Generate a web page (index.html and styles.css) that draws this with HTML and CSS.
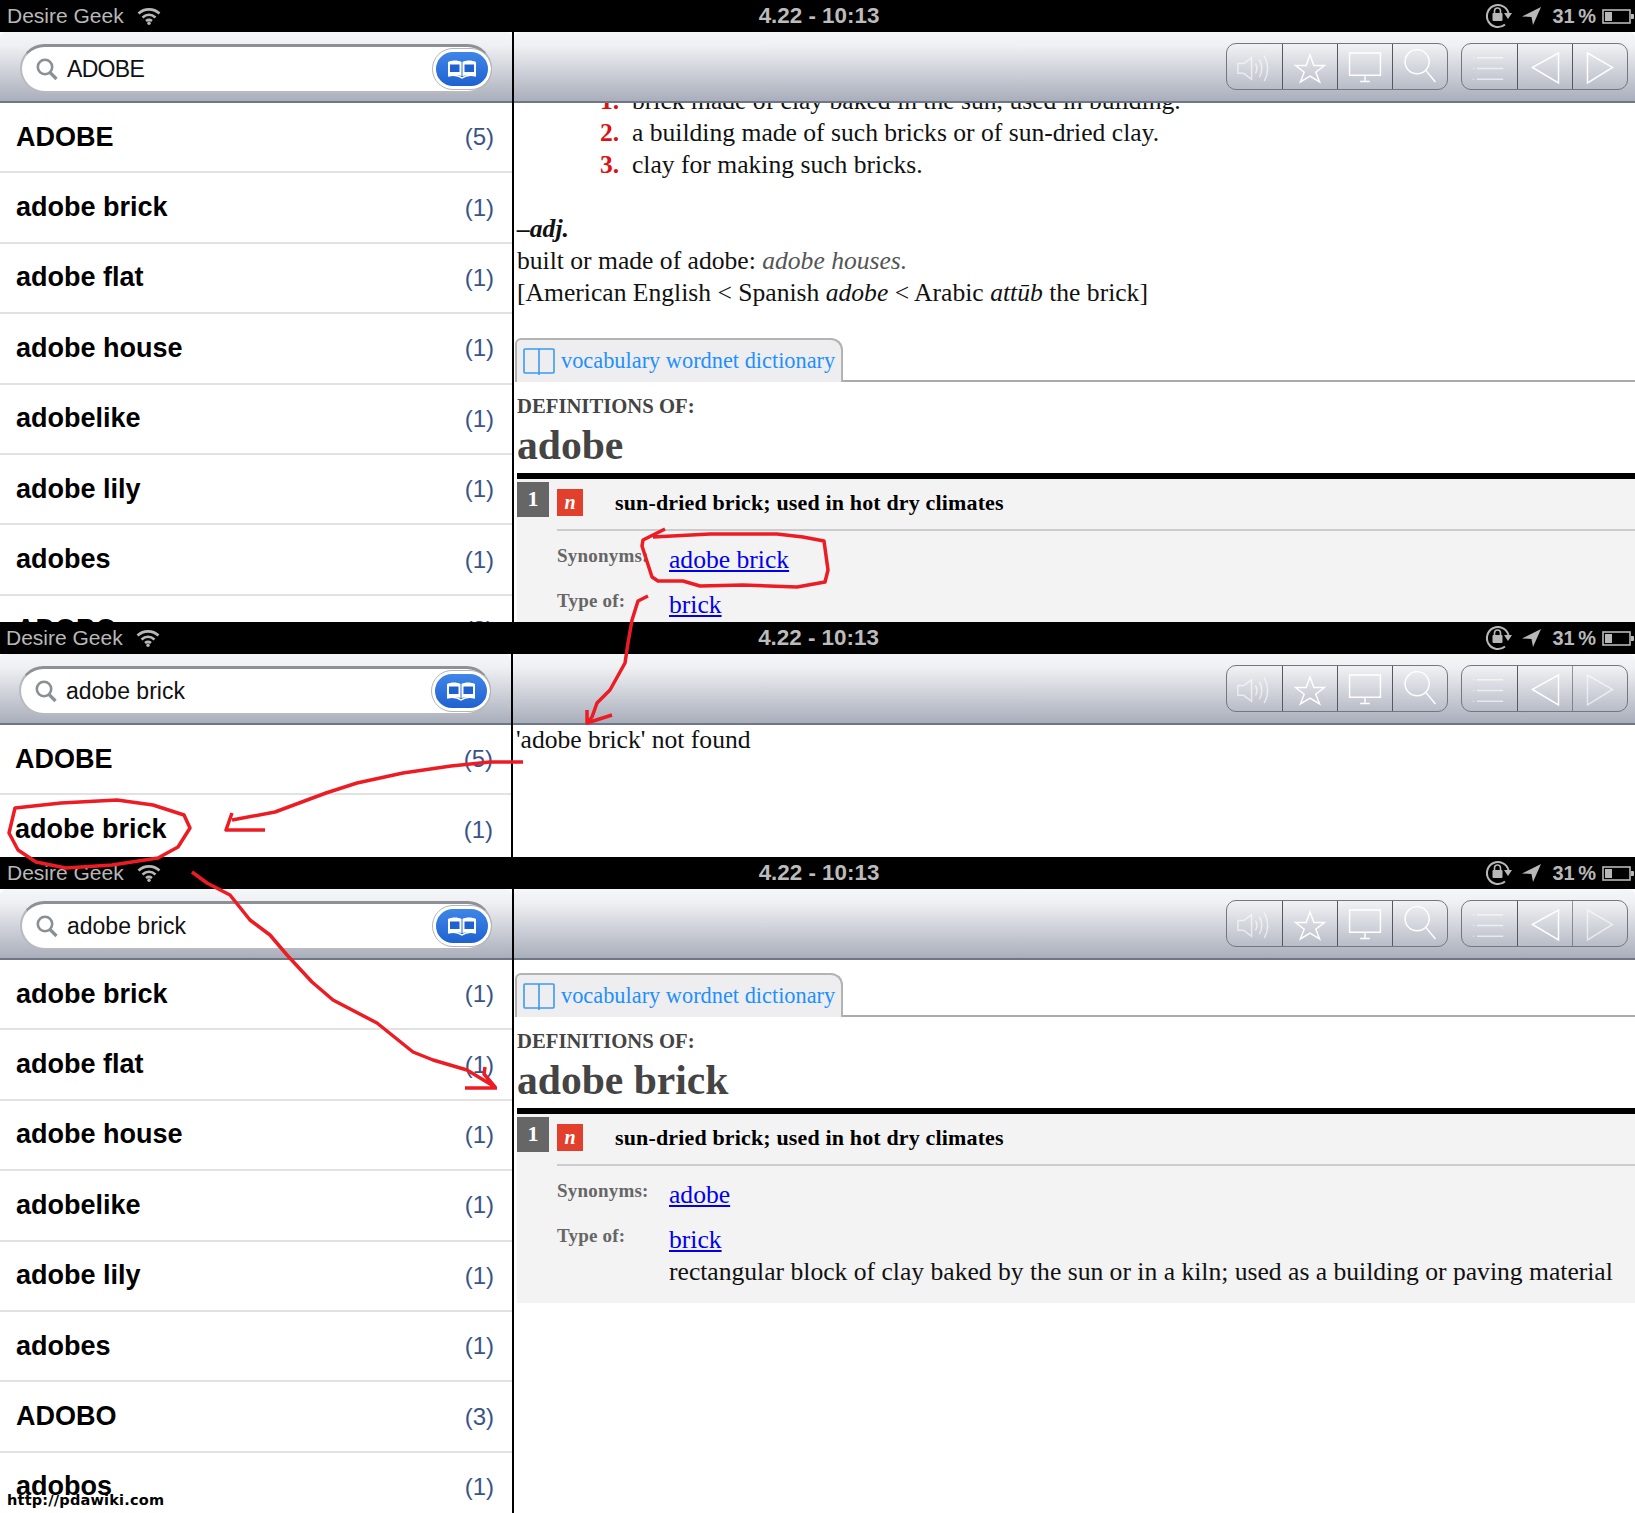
FILE: index.html
```html
<!DOCTYPE html>
<html lang="en">
<head>
    <meta charset="UTF-8">
    <meta name="viewport" content="width=device-width, initial-scale=1.0">
    <title>Dictionary lookup of adobe brick</title>
    <link rel="stylesheet" href="styles.css">
</head>
<body>
    <!-- shared icons -->
    <svg class="defs" width="0" height="0">
        <symbol id="wifi" viewBox="0 0 24 18"><path d="M1.5 6.5C7.5 1 16.500 1 22.500 6.500M5.500 10.500C9.500 7 14.500 7 18.500 10.500M9 14C11 12.500 13 12.500 15 14" fill="none" stroke="#b8b8b8" stroke-width="2.600"/><circle cx="12" cy="16.300" r="1.700" fill="#b8b8b8"/></symbol>
        <symbol id="lock" viewBox="0 0 28 28"><path d="M21 22.500A11 11 0 1 1 24.500 11" fill="none" stroke="#b8b8b8" stroke-width="2"/><path d="M20 11h8l-4 6z" fill="#b8b8b8"/><rect x="8.500" y="11" width="10" height="8" rx="1" fill="#b8b8b8"/><path d="M10.500 11V9a3 3 0 0 1 6 0v2" fill="none" stroke="#b8b8b8" stroke-width="1.600"/></symbol>
        <symbol id="arrow" viewBox="0 0 20 18"><path d="M19 0L0 9.500l9.500 .5L11 18z" fill="#b8b8b8"/></symbol>
        <symbol id="battery" viewBox="0 0 33 15"><rect x="1" y="1" width="27" height="13" fill="none" stroke="#b8b8b8" stroke-width="1.600"/><rect x="3" y="3" width="7" height="9" fill="#b8b8b8"/><path d="M29 5h2a1 1 0 0 1 1 1v3a1 1 0 0 1-1 1h-2z" fill="#b8b8b8"/></symbol>
        <symbol id="search" viewBox="0 0 22 23"><circle cx="9" cy="9" r="7.200" fill="none" stroke="#8a8f96" stroke-width="2.600"/><path d="M14 14.500L20.500 21" stroke="#8a8f96" stroke-width="3.200" fill="none"/></symbol>
        <symbol id="book" viewBox="0 0 30 20"><path d="M1 3C5 1 11 1 14.500 3V17C11 15.500 5 15.500 1 17zM15.500 3C19 1 25 1 29 3V17C25 15.500 19 15.500 15.500 17z" fill="#fff"/><path d="M3 5.500h9.500v7.500H3zM17.500 5.500H27v7.500h-9.500z" fill="#1f62cf"/><path d="M1 17C5 16 11 16 15 19C19 16 25 16 29 17" fill="none" stroke="#fff" stroke-width="1.500"/></symbol>
        <symbol id="sound" viewBox="0 0 56 46"><path d="M11 20h6l8-6v22l-8-6h-6zM29 20q3 5 0 10M33 16q5 9 0 18M38 12q7 13 0 26"/></symbol>
        <symbol id="star" viewBox="0 0 56 46"><path d="M28 11l4 11h11l-9 7 4 10-10-6-10 6 4-10-9-7h11z"/></symbol>
        <symbol id="screen" viewBox="0 0 56 46"><path d="M12 9h32v23H12zM28 32v6M23 38.500h10"/></symbol>
        <symbol id="find" viewBox="0 0 56 46"><circle cx="25" cy="18" r="12.500"/><path d="M34 27l10 12"/></symbol>
        <symbol id="list" viewBox="0 0 56 46"><path d="M15 14h27M15 25h27M15 36h27M11 14h1M11 25h1M11 36h1"/></symbol>
        <symbol id="back" viewBox="0 0 56 46"><path d="M15 24L42 9v31z"/></symbol>
        <symbol id="forward" viewBox="0 0 56 46"><path d="M15 9l26 15-26 16z"/></symbol>
        <symbol id="tabbook" viewBox="0 0 32 28"><path d="M2 2h28a1 1 0 0 1 1 1v22a1 1 0 0 1-1 1H2a1 1 0 0 1-1-1V3a1 1 0 0 1 1-1zM16 2v26" fill="none" stroke="#3b9af0" stroke-width="1.600"/></symbol>
    </svg>

    <!-- first screen -->
    <section class="screen screen-one">
        <header class="status">
            <div class="status-left"><span>Desire Geek</span><svg class="ic-wifi"><use href="#wifi"/></svg></div>
            <div class="clock">4.22 - 10:13</div>
            <div class="status-right"><svg class="ic-lock"><use href="#lock"/></svg><svg class="ic-arrow"><use href="#arrow"/></svg><span>31 %</span><svg class="ic-battery"><use href="#battery"/></svg></div>
        </header>
        <div class="panes">
            <aside class="sidebar">
                <div class="bar search-bar">
                    <div class="pill"><svg class="ic-search"><use href="#search"/></svg><span class="query caps">ADOBE</span><span class="book-btn"><svg class="ic-book"><use href="#book"/></svg></span></div>
                </div>
                <ul class="words">
                    <li><b>ADOBE</b><span>(5)</span></li>
                    <li><b>adobe brick</b><span>(1)</span></li>
                    <li><b>adobe flat</b><span>(1)</span></li>
                    <li><b>adobe house</b><span>(1)</span></li>
                    <li><b>adobelike</b><span>(1)</span></li>
                    <li><b>adobe lily</b><span>(1)</span></li>
                    <li><b>adobes</b><span>(1)</span></li>
                    <li><b>ADOBO</b><span>(3)</span></li>
                </ul>
            </aside>
            <main class="main">
                <div class="bar tools">
                    <div class="group"><svg class="dim"><use href="#sound"/></svg><svg><use href="#star"/></svg><svg><use href="#screen"/></svg><svg><use href="#find"/></svg></div>
                    <div class="group"><svg class="dim"><use href="#list"/></svg><svg><use href="#back"/></svg><svg><use href="#forward"/></svg></div>
                </div>
                <div class="page page-scrolled">
                    <ol class="senses">
                        <li>brick made of clay baked in the sun, used in building.</li>
                        <li>a building made of such bricks or of sun-dried clay.</li>
                        <li>clay for making such bricks.</li>
                    </ol>
                    <p class="pos">–adj.</p>
                    <p>built or made of adobe: <i class="example">adobe houses.</i></p>
                    <p>[American English &lt; Spanish <i>adobe</i> &lt; Arabic <i>attūb</i> the brick]</p>
                    <div class="tabline tabline-first"><div class="tab"><svg class="ic-tab"><use href="#tabbook"/></svg>vocabulary wordnet dictionary</div></div>
                    <div class="def-of">DEFINITIONS OF:</div>
                    <h1 class="headword">adobe</h1>
                    <div class="sense">
                        <div class="sense-head"><span class="num">1</span><span class="badge">n</span><span class="gloss">sun-dried brick; used in hot dry climates</span></div>
                        <div class="sense-body">
                            <span class="label">Synonyms:</span><a href="#">adobe brick</a>
                            <span class="label">Type of:</span><a href="#">brick</a>
                        </div>
                    </div>
                </div>
            </main>
        </div>
    </section>

    <!-- second screen -->
    <section class="screen screen-two">
        <header class="status">
            <div class="status-left"><span>Desire Geek</span><svg class="ic-wifi"><use href="#wifi"/></svg></div>
            <div class="clock">4.22 - 10:13</div>
            <div class="status-right"><svg class="ic-lock"><use href="#lock"/></svg><svg class="ic-arrow"><use href="#arrow"/></svg><span>31 %</span><svg class="ic-battery"><use href="#battery"/></svg></div>
        </header>
        <div class="panes">
            <aside class="sidebar">
                <div class="bar search-bar">
                    <div class="pill"><svg class="ic-search"><use href="#search"/></svg><span class="query">adobe brick</span><span class="book-btn"><svg class="ic-book"><use href="#book"/></svg></span></div>
                </div>
                <ul class="words">
                    <li><b>ADOBE</b><span>(5)</span></li>
                    <li><b>adobe brick</b><span>(1)</span></li>
                </ul>
            </aside>
            <main class="main">
                <div class="bar tools">
                    <div class="group"><svg class="dim"><use href="#sound"/></svg><svg><use href="#star"/></svg><svg><use href="#screen"/></svg><svg><use href="#find"/></svg></div>
                    <div class="group"><svg class="dim"><use href="#list"/></svg><svg><use href="#back"/></svg><svg class="dim"><use href="#forward"/></svg></div>
                </div>
                <div class="page"><p class="not-found">'adobe brick' not found</p></div>
            </main>
        </div>
    </section>

    <!-- third screen -->
    <section class="screen screen-three">
        <header class="status">
            <div class="status-left"><span>Desire Geek</span><svg class="ic-wifi"><use href="#wifi"/></svg></div>
            <div class="clock">4.22 - 10:13</div>
            <div class="status-right"><svg class="ic-lock"><use href="#lock"/></svg><svg class="ic-arrow"><use href="#arrow"/></svg><span>31 %</span><svg class="ic-battery"><use href="#battery"/></svg></div>
        </header>
        <div class="panes">
            <aside class="sidebar">
                <div class="bar search-bar">
                    <div class="pill"><svg class="ic-search"><use href="#search"/></svg><span class="query">adobe brick</span><span class="book-btn"><svg class="ic-book"><use href="#book"/></svg></span></div>
                </div>
                <ul class="words">
                    <li><b>adobe brick</b><span>(1)</span></li>
                    <li><b>adobe flat</b><span>(1)</span></li>
                    <li><b>adobe house</b><span>(1)</span></li>
                    <li><b>adobelike</b><span>(1)</span></li>
                    <li><b>adobe lily</b><span>(1)</span></li>
                    <li><b>adobes</b><span>(1)</span></li>
                    <li><b>ADOBO</b><span>(3)</span></li>
                    <li><b>adobos</b><span>(1)</span></li>
                </ul>
            </aside>
            <main class="main">
                <div class="bar tools">
                    <div class="group"><svg class="dim"><use href="#sound"/></svg><svg><use href="#star"/></svg><svg><use href="#screen"/></svg><svg><use href="#find"/></svg></div>
                    <div class="group"><svg class="dim"><use href="#list"/></svg><svg><use href="#back"/></svg><svg class="dim"><use href="#forward"/></svg></div>
                </div>
                <div class="page">
                    <div class="tabline"><div class="tab"><svg class="ic-tab"><use href="#tabbook"/></svg>vocabulary wordnet dictionary</div></div>
                    <div class="def-of">DEFINITIONS OF:</div>
                    <h1 class="headword">adobe brick</h1>
                    <div class="sense">
                        <div class="sense-head"><span class="num">1</span><span class="badge">n</span><span class="gloss">sun-dried brick; used in hot dry climates</span></div>
                        <div class="sense-body">
                            <span class="label">Synonyms:</span><a href="#">adobe</a>
                            <span class="label">Type of:</span><div><a href="#">brick</a><br>rectangular block of clay baked by the sun or in a kiln; used as a building or paving material</div>
                        </div>
                    </div>
                </div>
            </main>
        </div>
    </section>

    <div class="watermark">http://pdawiki.com</div>

    <!-- red pen marks drawn over the screens -->
    <svg class="marks" viewBox="0 0 1635 1513">
        <path d="M665 529L643 540L642 546L652 577L658 581L683 581L700 586L743 585L797 587L825 582L828 570L824 541L803 537L777 534L710 534L653 537"/>
        <path d="M648 596L638 601L632 620L628 643L625 663L610 690L597 703L592 717L587 723M587 710L587 723L612 715"/>
        <path d="M523 762L490 762L451 766L403 773L357 783L326 793L275 812L232 820M232 813L226 830L265 830"/>
        <path d="M15 808L61 803L117 800L153 805L184 815L190 828L178 847L158 858L112 865L66 868L36 862L18 850L9 833Z"/>
        <path d="M192 872L207 883L230 895L250 920L270 935L287 955L312 982L333 1000L377 1023L413 1052L433 1060L467 1070L495 1087M465 1088L497 1088M485 1067L484 1074L495 1087"/>
    </svg>
</body>
</html>
```

FILE: styles.css
```css
* {
    box-sizing: border-box;
}
body {
    margin: 0;
    width: 1635px;
    height: 1513px;
    overflow: hidden;
    position: relative;
    background: #fff;
    font-family: "Liberation Sans", Arial, sans-serif;
}
.defs {
    position: absolute;
}
.screen {
    display: flex;
    flex-direction: column;
    overflow: hidden;
}
.screen-one {
    height: 622px;
}
.screen-two {
    height: 235px;
    margin-left: -1px;
}
.screen-three {
    height: 656px;
}

/* status bar */
.status {
    height: 32px;
    flex: none;
    background: #000;
    color: #b8b8b8;
    display: grid;
    grid-template-columns: 1fr auto 1fr;
    align-items: center;
    padding: 0 0 0 3px;
}
.status-left {
    display: flex;
    align-items: center;
    font-size: 21px;
    margin-left: 4px;
}
.ic-wifi {
    width: 24px;
    height: 18px;
    margin-left: 13px;
}
.clock {
    font-size: 22.400px;
    font-weight: bold;
    color: #bcbcbc;
}
.status-right {
    display: flex;
    align-items: center;
    justify-content: flex-end;
    font-size: 20px;
    font-weight: bold;
    word-spacing: -2px;
}
.ic-lock {
    width: 28px;
    height: 28px;
}
.ic-arrow {
    width: 20px;
    height: 18px;
    margin: 0 10px 0 10px;
}
.ic-battery {
    width: 33px;
    height: 15px;
    margin-left: 6px;
}

.panes {
    flex: 1;
    display: flex;
    min-height: 0;
}
.sidebar {
    width: 514px;
    flex: none;
    border-right: 2px solid #000;
}
.main {
    flex: 1;
    min-width: 0;
}

/* gradient toolbars */
.bar {
    height: 71px;
    background: linear-gradient(#f5f6f8 0%, #eff0f3 20%, #a9aebb 100%);
    border-bottom: 2px solid #6f7686;
    border-radius: 6px 6px 0 0;
}
.search-bar {
    padding: 12px 20px 0;
}
.pill {
    height: 49px;
    border-radius: 25px;
    background: #fff;
    border: 2px solid #b8bac0;
    border-top: 3px solid #8e9096;
    display: flex;
    align-items: center;
    padding-left: 14px;
}
.ic-search {
    width: 22px;
    height: 23px;
}
.query {
    flex: 1;
    font-size: 23px;
    margin-left: 9px;
    color: #111;
}
.query.caps {
    letter-spacing: -0.7px;
}
.book-btn {
    width: 58px;
    height: 40px;
    margin-right: -1px;
    border-radius: 20px;
    border: 3px solid #fff;
    outline: 1px solid #b5b5b5;
    background: linear-gradient(#3f86e8, #1f62cf);
    display: flex;
    align-items: center;
    justify-content: center;
}
.ic-book {
    width: 30px;
    height: 20px;
}
.tools {
    position: relative;
    z-index: 1;
    display: flex;
    justify-content: flex-end;
    gap: 13px;
    padding: 11px 7px 0 0;
}
.group {
    height: 47px;
    display: flex;
    border: 1px solid #74777f;
    border-radius: 10px;
}
.group svg {
    width: 55px;
    height: 45px;
    fill: none;
    stroke: #fff;
    stroke-width: 1.500;
    border-left: 1px solid #55585f;
}
.group svg:first-child {
    border-left: none;
}
.group svg.dim {
    opacity: 0.6;
}

/* word list */
.words {
    list-style: none;
    margin: 0;
    padding: 0;
}
.words li {
    height: 70.400px;
    display: flex;
    align-items: center;
    justify-content: space-between;
    padding: 0 18px 0 16px;
    border-bottom: 2px solid #e2e2e2;
}
.words b {
    font-size: 27px;
    color: #000;
}
.words span {
    font-size: 24px;
    color: #385487;
}

/* dictionary page */
.page {
    padding-left: 3px;
    font-family: "Liberation Serif", "Times New Roman", serif;
    font-size: 25.600px;
    line-height: 32px;
    color: #111;
}
.page p {
    margin: 0;
}
.page-scrolled {
    margin-top: -18px;
}
.senses {
    margin: 0 0 32px;
    padding-left: 115px;
}
.senses li::marker {
    content: counter(list-item) ".\00a0\00a0";
    color: #e01010;
    font-weight: bold;
}
.page .pos {
    font-weight: bold;
    font-style: italic;
}
.example {
    color: #555;
}
.page .not-found {
    margin-top: -1px;
}
.tabline {
    margin-top: 13px;
    border-bottom: 2px solid #aaa;
    height: 44px;
    margin-left: -2px;
}
.tabline-first {
    margin-top: 29px;
}
.tab {
    width: 328px;
    height: 44px;
    display: flex;
    align-items: center;
    background: #eeeef0;
    border: 2px solid #b3b3b3;
    border-bottom: none;
    border-radius: 6px 12px 0 0;
    color: #1e90ff;
    font-size: 22.350px;
    white-space: nowrap;
    padding-left: 6px;
}
.ic-tab {
    width: 32px;
    height: 28px;
    margin-right: 6px;
    flex: none;
}
.def-of {
    margin-top: 10px;
    font-size: 20.700px;
    line-height: 28px;
    font-weight: bold;
    color: #444;
}
.headword {
    margin: 0;
    font-size: 41.600px;
    line-height: 50px;
    height: 53px;
    color: #444;
}
.sense {
    border-top: 6px solid #000;
    background: #f3f3f3;
    padding-bottom: 15px;
}
.sense-head {
    display: flex;
    align-items: flex-start;
    height: 50px;
}
.num {
    width: 32px;
    height: 35px;
    margin-top: 3px;
    background: #666;
    color: #fff;
    font-weight: bold;
    font-size: 22px;
    line-height: 34px;
    text-align: center;
}
.badge {
    width: 26px;
    height: 27px;
    margin: 10px 0 0 8px;
    background: #e33f2d;
    color: #fff;
    font-weight: bold;
    font-style: italic;
    font-size: 20px;
    line-height: 27px;
    text-align: center;
}
.gloss {
    margin: 8px 0 0 32px;
    font-weight: bold;
    font-size: 22px;
    letter-spacing: 0.15px;
    color: #000;
}
.sense-body {
    margin-left: 40px;
    border-top: 2px solid #ccc;
    padding-top: 13px;
    display: grid;
    grid-template-columns: 112px 1fr;
    row-gap: 13px;
}
.label {
    margin-top: 1px;
    font-size: 19px;
    letter-spacing: 0.2px;
    font-weight: bold;
    color: #666;
    line-height: 22px;
}
.sense-body a {
    color: #00e;
}

.watermark {
    position: absolute;
    left: 7px;
    bottom: 5px;
    font-family: "DejaVu Sans", sans-serif;
    font-size: 14.500px;
    letter-spacing: 0.2px;
    font-weight: bold;
    line-height: 16px;
    color: #000;
}
.marks {
    position: absolute;
    z-index: 2;
    left: 0;
    top: 0;
    width: 1635px;
    height: 1513px;
    fill: none;
    stroke: #ed1c24;
    stroke-width: 3.500;
    stroke-linejoin: round;
}
```
